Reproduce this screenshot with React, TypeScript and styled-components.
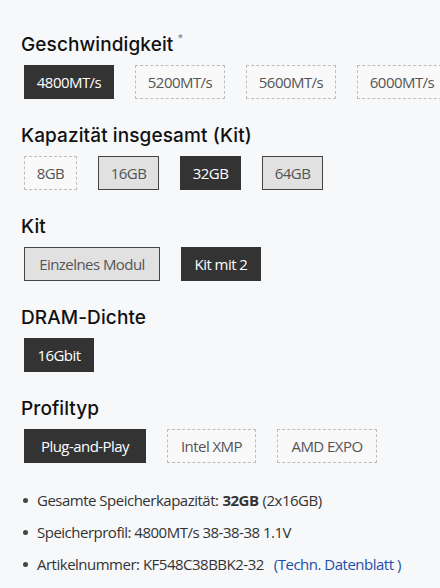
import React from "react";
import styled, { createGlobalStyle, css } from "styled-components";

const Global = createGlobalStyle`
  html, body { margin: 0; padding: 0; background: #f7f8fa; overflow: hidden; }
  * { box-sizing: border-box; }
`;

const Page = styled.div`
  display: flex;
  flex-direction: column;
  padding: 33px 0 0 21px;
  font-family: "Open Sans", "Noto Sans", sans-serif;
  color: #333;
`;

const Section = styled.section`
  display: flex;
  flex-direction: column;
  gap: 8px;
  margin-bottom: 25px;
`;

const Title = styled.h2`
  margin: 0;
  height: 24px;
  font-family: Inter, "Noto Sans", sans-serif;
  font-size: 19px;
  line-height: 24px;
  font-weight: 500;
  color: #111;
  letter-spacing: 0.1px;
`;

const Star = styled.sup`
  font-size: 11px;
  color: #888;
  margin-left: 4px;
  vertical-align: 9px;
  line-height: 0;
`;

const Row = styled.div`
  display: flex;
  flex-wrap: nowrap;
  gap: 21px;
  margin-left: 3px;
`;

type Variant = "selected" | "available" | "unavailable";

const Option = styled.button<{ $variant: Variant; $w: number }>`
  flex: none;
  width: ${(p) => p.$w}px;
  height: 34px;
  padding: 0;
  display: flex;
  align-items: center;
  justify-content: center;
  font-family: "Open Sans", "Noto Sans", sans-serif;
  font-size: 15px;
  letter-spacing: -0.55px;
  white-space: nowrap;
  ${(p) =>
    p.$variant === "selected"
      ? css`
          background: #333333;
          color: #fff;
          border: 1px solid #333333;
        `
      : p.$variant === "available"
      ? css`
          background: #e1e1e1;
          color: #555;
          border: 1px solid #444;
        `
      : css`
          background: #f9f9f9;
          color: #555;
          border: 1px dashed #bdbdbd;
        `}
`;

const List = styled.ul`
  list-style: none;
  margin: 2px 0 0 0;
  padding: 0;
  display: flex;
  flex-direction: column;
  gap: 12px;
`;

const Item = styled.li`
  display: flex;
  align-items: center;
  height: 20px;
  font-size: 15px;
  line-height: 20px;
  letter-spacing: -0.5px;
  color: #333;
  &::before {
    content: "";
    width: 5px;
    height: 5px;
    border-radius: 50%;
    background: #444;
    margin: 0 9px 0 2px;
    flex: none;
  }
`;

const Strong = styled.b`
  font-weight: 700;
  margin: 0 4px;
`;

const Link = styled.a`
  color: #1f4fa8;
  text-decoration: none;
  margin-left: 10px;
`;

type Opt = { label: string; v: Variant; w: number };

const sections: { title: string; star?: boolean; opts: Opt[] }[] = [
  {
    title: "Geschwindigkeit",
    star: true,
    opts: [
      { label: "4800MT/s", v: "selected", w: 90 },
      { label: "5200MT/s", v: "unavailable", w: 90 },
      { label: "5600MT/s", v: "unavailable", w: 90 },
      { label: "6000MT/s", v: "unavailable", w: 90 },
    ],
  },
  {
    title: "Kapazität insgesamt (Kit)",
    opts: [
      { label: "8GB", v: "unavailable", w: 53 },
      { label: "16GB", v: "available", w: 61 },
      { label: "32GB", v: "selected", w: 61 },
      { label: "64GB", v: "available", w: 61 },
    ],
  },
  {
    title: "Kit",
    opts: [
      { label: "Einzelnes Modul", v: "available", w: 136 },
      { label: "Kit mit 2", v: "selected", w: 80 },
    ],
  },
  {
    title: "DRAM-Dichte",
    opts: [{ label: "16Gbit", v: "selected", w: 70 }],
  },
  {
    title: "Profiltyp",
    opts: [
      { label: "Plug-and-Play", v: "selected", w: 122 },
      { label: "Intel XMP", v: "unavailable", w: 89 },
      { label: "AMD EXPO", v: "unavailable", w: 100 },
    ],
  },
];

export default function App() {
  return (
    <>
      <Global />
      <Page>
        {sections.map((s) => (
          <Section key={s.title}>
            <Title>
              {s.title}
              {s.star && <Star>*</Star>}
            </Title>
            <Row>
              {s.opts.map((o) => (
                <Option key={o.label} $variant={o.v} $w={o.w}>
                  {o.label}
                </Option>
              ))}
            </Row>
          </Section>
        ))}
        <List>
          <Item>
            Gesamte Speicherkapazität:<Strong>32GB</Strong>(2x16GB)
          </Item>
          <Item>Speicherprofil: 4800MT/s 38-38-38 1.1V</Item>
          <Item>
            Artikelnummer: KF548C38BBK2-32<Link href="#">(Techn. Datenblatt )</Link>
          </Item>
        </List>
      </Page>
    </>
  );
}
